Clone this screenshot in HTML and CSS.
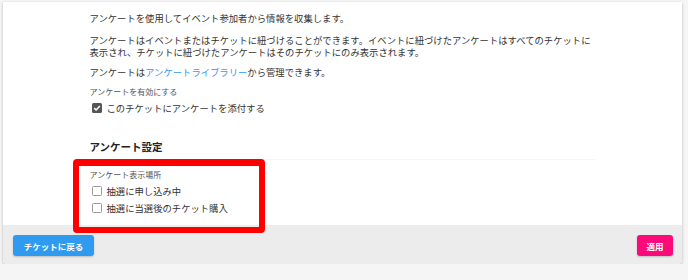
FILE: index.html
```html
<!DOCTYPE html>
<html lang="ja">
<head>
    <meta charset="UTF-8">
    <meta name="viewport" content="width=device-width, initial-scale=1.0">
    <title>アンケート</title>
    <link rel="stylesheet" href="styles.css">
</head>
<body>
    <div class="modal">
        <div class="modal-body">
            <div class="content">
                <p class="intro">アンケートを使用してイベント参加者から情報を収集します。</p>
                <p class="desc">アンケートはイベントまたはチケットに紐づけることができます。イベントに紐づけたアンケートはすべてのチケットに表示され、チケットに紐づけたアンケートはそのチケットにのみ表示されます。</p>
                <p class="desc">アンケートは<a href="#" class="link">アンケートライブラリー</a>から管理できます。</p>

                <div class="field-label">アンケートを有効にする</div>
                <label class="check-row">
                    <span class="box checked">
                        <svg width="10" height="10" viewBox="0 0 10 10"><path d="M2.2 5.1 L4.1 7 L7.9 3" fill="none" stroke="#fff" stroke-width="1.5"/></svg>
                    </span>
                    このチケットにアンケートを添付する
                </label>

                <h2 class="section-title">アンケート設定</h2>

                <div class="group">
                    <div class="field-label">アンケート表示場所</div>
                    <label class="check-row"><span class="box"></span>抽選に申し込み中</label>
                    <label class="check-row"><span class="box"></span>抽選に当選後のチケット購入</label>
                    <div class="highlight"></div>
                </div>
            </div>
        </div>
        <div class="modal-footer">
            <button class="btn btn-back">チケットに戻る</button>
            <button class="btn btn-apply">適用</button>
        </div>
    </div>
</body>
</html>
```

FILE: styles.css
```css
body {
    margin: 0;
    padding: 0;
    background-color: #f5f5f5;
    font-family: "Noto Sans CJK JP", "Liberation Sans", sans-serif;
    color: #333;
}

.modal {
    margin: 2px 6px 0 3px;
    background-color: #fff;
    border-radius: 0 0 4px 4px;
    box-shadow: 0 1px 3px rgba(0, 0, 0, 0.28);
}

.modal-body {
    padding: 10px 0 10px;
}

.content {
    width: 506px;
    margin: 0 auto;
    font-size: 9.33px;
    line-height: 12px;
}

.content p {
    margin: 0;
}

.intro {
    margin-bottom: 10px !important;
}

.desc {
    margin-bottom: 8px !important;
}

.link {
    color: #2f9bf0;
    text-decoration: none;
}

.field-label {
    font-size: 8px;
    line-height: 11px;
    color: #555;
    margin-top: 8px;
}

.check-row {
    display: flex;
    align-items: center;
    height: 14px;
    margin-top: 4px;
    padding-left: 2px;
}

.check-row + .check-row {
    margin-top: 3px;
}

.box {
    width: 8px;
    height: 8px;
    border: 1px solid #9a9a9a;
    border-radius: 1.5px;
    margin-right: 5px;
    background: #fff;
    flex-shrink: 0;
}

.box.checked {
    width: 10px;
    height: 10px;
    border: none;
    background: #555;
}

.box svg {
    display: block;
}

.section-title {
    margin: 25px 0 0;
    font-size: 10.5px;
    line-height: 14px;
    font-weight: 700;
    color: #222;
    padding-bottom: 5px;
    border-bottom: 1px solid #f6f6f6;
}

.group {
    position: relative;
}

.group .field-label {
    margin-top: 9px;
}

.highlight {
    position: absolute;
    left: -17px;
    top: -10px;
    width: 180px;
    height: 61px;
    border: 6px solid #ff0000;
    border-top-width: 7px;
    border-radius: 4px;
}

.modal-footer {
    display: flex;
    justify-content: space-between;
    background-color: #ececec;
    padding: 10px 9px 8px 10px;
    border-radius: 0 0 4px 4px;
}

.btn {
    height: 21px;
    border: none;
    border-radius: 3px;
    color: #fff;
    font-family: "Noto Sans CJK JP", sans-serif;
    font-size: 8.5px;
    font-weight: 700;
    cursor: pointer;
    box-shadow: 0 1px 2px rgba(0, 0, 0, 0.2);
}

.btn-back {
    width: 81px;
    background-color: #2f9bf0;
}

.btn-apply {
    width: 36px;
    background-color: #fc0a7a;
}
```
